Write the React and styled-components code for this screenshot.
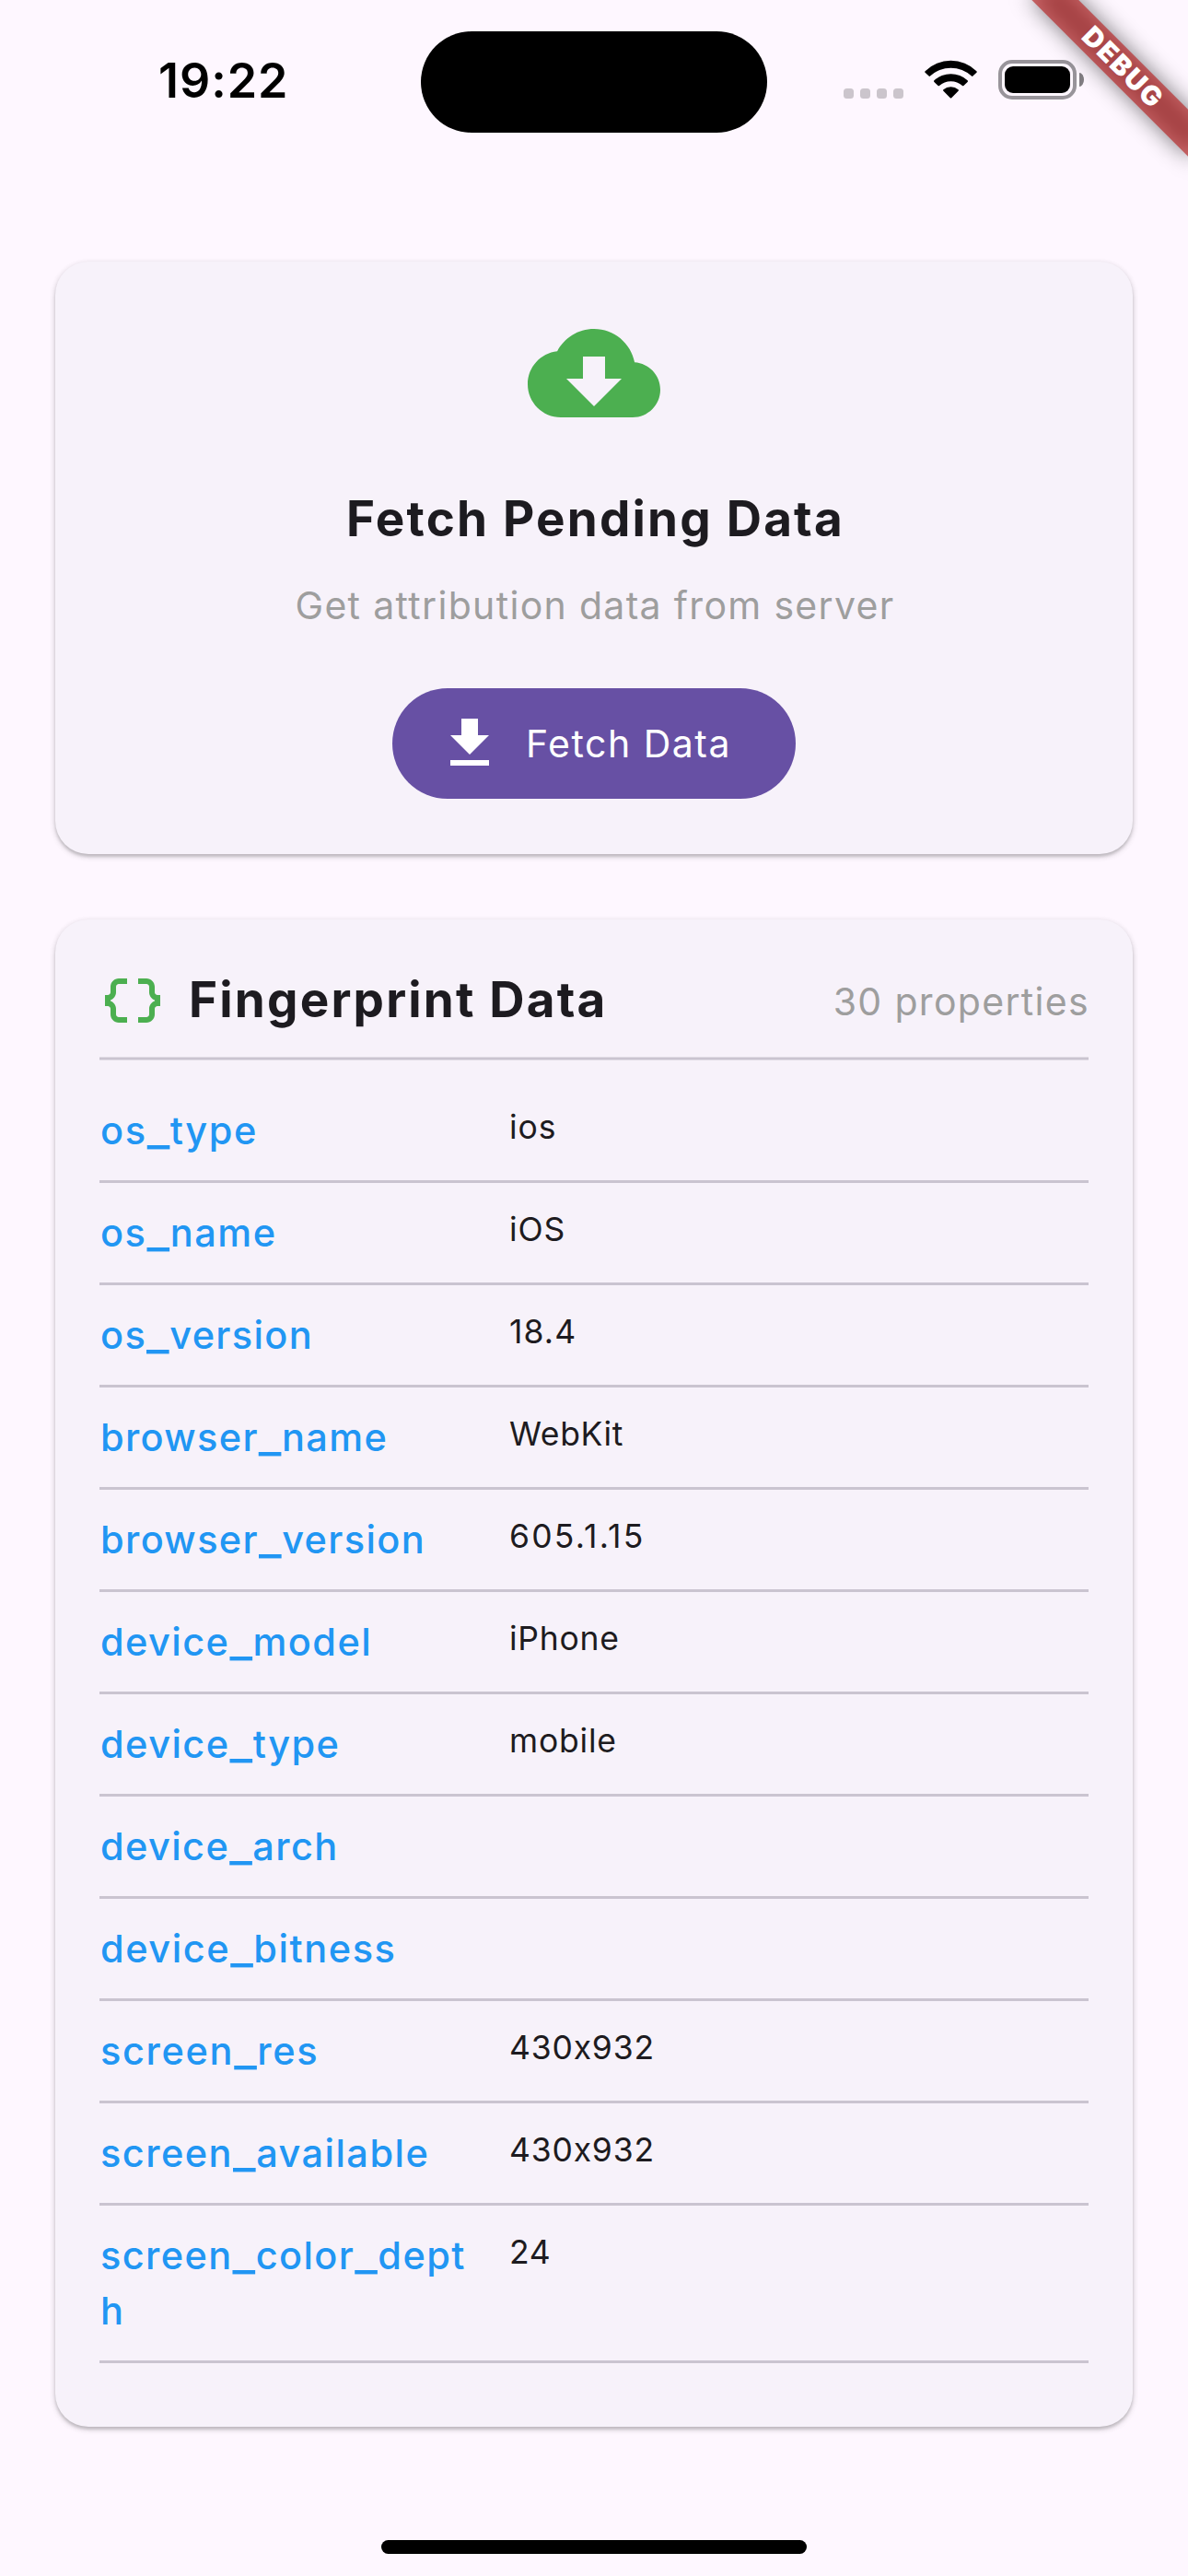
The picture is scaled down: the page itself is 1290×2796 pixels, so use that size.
import React from "react";
import styled, { createGlobalStyle } from "styled-components";

const GlobalStyle = createGlobalStyle`
  *, *::before, *::after { box-sizing: border-box; }
  body {
    margin: 0;
    background: #fef7ff;
    font-family: Inter, "Liberation Sans", sans-serif;
    color: #1d1b20;
  }
`;

const Screen = styled.div`
  position: relative;
  display: flex;
  flex-direction: column;
  width: 1290px;
  height: 2796px;
  overflow: hidden;
  background: #fef7ff;
`;

const StatusBar = styled.header`
  display: grid;
  grid-template-columns: 457px 376px 1fr;
  height: 177px;
  padding-top: 33px;
`;

const Clock = styled.div`
  padding-left: 172px;
  font-size: 52px;
  line-height: 72px;
  font-weight: 600;
  letter-spacing: 0.94px;
  color: #000;
  margin-top: 19px;
`;

const Island = styled.div`
  height: 110px;
  margin-top: 1px;
  border-radius: 55px;
  background: #000;
`;

const Indicators = styled.div`
  display: flex;
  align-items: flex-end;
  height: 75px;
  padding-left: 83px;
`;

const SignalDots = styled.div`
  display: flex;
  gap: 7px;
  margin: 0 23px 1px 0;
`;

const Dot = styled.span`
  width: 11px;
  height: 11px;
  border-radius: 3.5px;
  background: #cbc5cc;
`;

const WifiIcon = styled.svg`
  width: 57px;
  height: 42px;
  margin: 0 23px 1px 0;
`;

const Battery = styled.div`
  width: 85px;
  height: 43px;
  padding: 3px;
  border: 4px solid #98949a;
  border-radius: 15px;
`;

const BatteryLevel = styled.div`
  height: 29px;
  width: 71px;
  border-radius: 9px;
  background: #000;
`;

const BatteryCap = styled.span`
  width: 5px;
  height: 15px;
  margin: 0 0 14px 3px;
  border-radius: 0 5px 5px 0 / 0 7.5px 7.5px 0;
  background: #817d82;
`;

const Content = styled.main`
  flex: 1;
  display: flex;
  flex-direction: column;
  gap: 71px;
  padding: 107px 60px 0;
`;

const Card = styled.section`
  display: flex;
  flex-direction: column;
  padding: 49px 48px 48px;
  border-radius: 36px;
  background: #f7f2fa;
  box-shadow:
    0 3px 3px rgba(0, 0, 0, 0.12),
    0 2px 6px rgba(0, 0, 0, 0.15),
    0 3px 9px rgba(0, 0, 0, 0.06);
`;

const FetchCard = styled(Card)`
  align-items: center;
  height: 643px;
`;

const DataCard = styled(Card)`
  height: 1636px;
`;

const CloudIcon = styled.svg`
  width: 144px;
  height: 144px;
  fill: #4caf50;
`;

const Title = styled.h2`
  margin: 0;
  padding-left: 1px;
  font-size: 53px;
  line-height: 77px;
  font-weight: 700;
  letter-spacing: 2.18px;
  white-space: nowrap;
`;

const FetchTitle = styled(Title)`
  margin-top: 48px;
  padding-left: 3px;
`;

const Muted = styled.p`
  margin: 0;
  font-size: 41px;
  line-height: 60px;
  letter-spacing: 1.32px;
  color: #9e9e9e;
  white-space: nowrap;
`;

const Subtitle = styled(Muted)`
  margin-top: 25px;
  padding-left: 2px;
`;

const FetchButton = styled.button`
  display: flex;
  align-items: center;
  gap: 25px;
  width: 438px;
  height: 120px;
  margin: 60px 0 0;
  padding: 0 0 0 48px;
  border: 0;
  border-radius: 60px;
  background: #6750a4;
  color: #fff;
  font-family: inherit;
  font-size: 41px;
  line-height: 60px;
  font-weight: 400;
  letter-spacing: 1.5px;
  white-space: nowrap;
`;

const ButtonIcon = styled.svg`
  width: 72px;
  height: 72px;
  fill: currentColor;
`;

const DataHeader = styled.div`
  display: flex;
  align-items: center;
  height: 78px;
`;

const BracesIcon = styled.svg`
  width: 72px;
  height: 72px;
  margin-right: 24px;
  fill: #4caf50;
`;

const DataTitle = styled(Title)`
  margin-top: -1px;
`;

const Count = styled(Muted)`
  margin: 1px -1px 0 auto;
`;

const HeaderRule = styled.div`
  height: 4px;
  margin: 22px 0;
  background: #cac4d0;
  border: solid #e0dbe5;
  border-width: 1px 0;
`;

const PropertyRow = styled.div`
  display: grid;
  grid-template-columns: 420px 1fr;
  column-gap: 24px;
  align-items: start;
  padding: 24px 0;
  border-bottom: 3px solid #cac4d0;
`;

const PropertyName = styled.div`
  min-height: 60px;
  padding-left: 1px;
  font-size: 41.5px;
  line-height: 60px;
  font-weight: 500;
  letter-spacing: ${(p) => p.$tracking}px;
  color: #2196f3;
  overflow-wrap: anywhere;
`;

const Underscore = styled.span`
  font-size: 54px;
  font-weight: 400;
  line-height: 0;
  letter-spacing: 0.5px;
  vertical-align: -1px;
`;

const PropertyValue = styled.div`
  padding-left: 1px;
  font-size: 35.5px;
  line-height: 54px;
  letter-spacing: ${(p) => p.$tracking}px;
`;

const HomeIndicator = styled.div`
  align-self: center;
  width: 462px;
  height: 15px;
  margin-bottom: 24px;
  border-radius: 8px;
  background: #000;
`;

const BannerCorner = styled.div`
  position: absolute;
  top: 0;
  left: 1290px;
  width: 0;
  height: 0;
  transform: rotate(45deg);
`;

const BannerShadow = styled.div`
  position: absolute;
  top: 84px;
  left: -120px;
  width: 240px;
  height: 36px;
  background: rgba(0, 0, 0, 0.5);
  filter: blur(12px);
`;

const Banner = styled.div`
  position: absolute;
  top: 84px;
  left: -120px;
  width: 240px;
  height: 36px;
  padding-left: 4px;
  background: rgba(183, 28, 28, 0.63);
  color: #fff;
  font-size: 29.5px;
  line-height: 35px;
  font-weight: 900;
  letter-spacing: 1.7px;
  text-align: center;
`;

const properties = [
  { name: "os_type", value: "ios", track: 1.6, valueTrack: 0.9 },
  { name: "os_name", value: "iOS", track: 1.55, valueTrack: 0.9 },
  { name: "os_version", value: "18.4", track: 1.34, valueTrack: 1.1 },
  { name: "browser_name", value: "WebKit", track: 1.34, valueTrack: 0.65 },
  { name: "browser_version", value: "605.1.15", track: 1.36, valueTrack: 2.2 },
  { name: "device_model", value: "iPhone", track: 1.42, valueTrack: 0.75 },
  { name: "device_type", value: "mobile", track: 1.45, valueTrack: 0.8 },
  { name: "device_arch", value: "", track: 1.38 },
  { name: "device_bitness", value: "", track: 1.55 },
  { name: "screen_res", value: "430x932", track: 1.65, valueTrack: 0.8 },
  { name: "screen_available", value: "430x932", track: 1.45, valueTrack: 0.8 },
  { name: "screen_color_depth", value: "24", track: 1.38, valueTrack: 0.6 },
];

function PropertyLabel({ name }) {
  return name.split("_").map((part, i) => (
    <React.Fragment key={i}>
      {i > 0 && <Underscore>_</Underscore>}
      {part}
    </React.Fragment>
  ));
}

export default function App() {
  return (
    <Screen>
      <GlobalStyle />
      <StatusBar>
        <Clock>19:22</Clock>
        <Island />
        <Indicators>
          <SignalDots>
            <Dot />
            <Dot />
            <Dot />
            <Dot />
          </SignalDots>
          <WifiIcon viewBox="0 0 57 42">
            <path d="M0.6 12.2 A40 40 0 0 1 56.4 12.2 Q57.2 13 56.4 13.8 L52.4 17.6 Q51.7 18.2 51 17.6 A33 33 0 0 0 6 17.6 Q5.3 18.2 4.6 17.6 L0.6 13.8 Q-0.2 13 0.6 12.2 Z" />
            <path d="M10.4 22.3 A26.5 26.5 0 0 1 46.6 22.3 Q47.4 23.1 46.6 23.9 L42.4 28 Q41.7 28.6 41 28 A19 19 0 0 0 16 28 Q15.3 28.6 14.6 28 L10.4 23.9 Q9.6 23.1 10.4 22.3 Z" />
            <path d="M20.4 32.2 A12.5 12.5 0 0 1 36.6 32.2 Q37.4 33 36.6 33.8 L29.2 41.2 Q28.5 41.9 27.8 41.2 L20.4 33.8 Q19.6 33 20.4 32.2 Z" />
          </WifiIcon>
          <Battery>
            <BatteryLevel />
          </Battery>
          <BatteryCap />
        </Indicators>
      </StatusBar>

      <Content>
        <FetchCard>
          <CloudIcon viewBox="0 0 24 24">
            <path d="M19.35 10.04C18.67 6.59 15.64 4 12 4 9.11 4 6.6 5.64 5.35 8.04 2.34 8.36 0 10.91 0 14c0 3.31 2.69 6 6 6h13c2.76 0 5-2.24 5-5 0-2.64-2.05-4.78-4.65-4.96zM17 13l-5 5-5-5h3V9h4v4h3z" />
          </CloudIcon>
          <FetchTitle>Fetch Pending Data</FetchTitle>
          <Subtitle>Get attribution data from server</Subtitle>
          <FetchButton>
            <ButtonIcon viewBox="0 0 24 24">
              <path d="M19 9h-4V3H9v6H5l7 7 7-7zM5 18v2h14v-2H5z" />
            </ButtonIcon>
            Fetch Data
          </FetchButton>
        </FetchCard>

        <DataCard>
          <DataHeader>
            <BracesIcon viewBox="0 0 24 24">
              <path d="M4 7v2c0 .55-.45 1-1 1H2v4h1c.55 0 1 .45 1 1v2c0 1.65 1.35 3 3 3h3v-2H7c-.55 0-1-.45-1-1v-2c0-1.3-.84-2.42-2-2.83v-.34C5.16 11.42 6 10.3 6 9V7c0-.55.45-1 1-1h3V4H7C5.35 4 4 5.35 4 7zM21 10c-.55 0-1-.45-1-1V7c0-1.65-1.35-3-3-3h-3v2h3c.55 0 1 .45 1 1v2c0 1.3.84 2.42 2 2.83v.34c-1.16.41-2 1.52-2 2.83v2c0 .55-.45 1-1 1h-3v2h3c1.65 0 3-1.35 3-3v-2c0-.55.45-1 1-1h1v-4h-1z" />
            </BracesIcon>
            <DataTitle>Fingerprint Data</DataTitle>
            <Count>30 properties</Count>
          </DataHeader>
          <HeaderRule />
          {properties.map((p) => (
            <PropertyRow key={p.name}>
              <PropertyName $tracking={p.track}>
                <PropertyLabel name={p.name} />
              </PropertyName>
              <PropertyValue $tracking={p.valueTrack || 0}>{p.value}</PropertyValue>
            </PropertyRow>
          ))}
        </DataCard>
      </Content>

      <HomeIndicator />

      <BannerCorner>
        <BannerShadow />
        <Banner>DEBUG</Banner>
      </BannerCorner>
    </Screen>
  );
}
